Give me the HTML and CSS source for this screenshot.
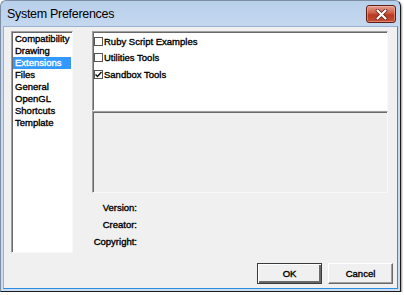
FILE: index.html
```html
<!DOCTYPE html>
<html lang="en">
<head>
    <meta charset="UTF-8">
    <title>System Preferences</title>
    <link rel="stylesheet" href="styles.css">
</head>
<body>
    <div class="window">
        <div class="titlebar">
            <span class="title">System Preferences</span>
            <button class="close" aria-label="Close">
                <svg width="13" height="11" viewBox="0 0 13 11">
                    <path d="M2.5 1.5 L10.5 9.5 M10.5 1.5 L2.5 9.5" stroke="#5a1a10" stroke-width="3.6" stroke-linecap="round"/>
                    <path d="M2.5 1.5 L10.5 9.5 M10.5 1.5 L2.5 9.5" stroke="#fff" stroke-width="2.2" stroke-linecap="round"/>
                </svg>
            </button>
        </div>

        <div class="client">
            <div class="main">
                <ul class="cats sunken">
                    <li>Compatibility</li>
                    <li>Drawing</li>
                    <li class="selected">Extensions</li>
                    <li>Files</li>
                    <li>General</li>
                    <li>OpenGL</li>
                    <li>Shortcuts</li>
                    <li>Template</li>
                </ul>

                <div class="details">
                    <ul class="extensions sunken">
                        <li><span class="check"></span>Ruby Script Examples</li>
                        <li><span class="check"></span>Utilities Tools</li>
                        <li><span class="check checked">
                            <svg width="7" height="7" viewBox="0 0 7 7"><path d="M0.5 3.5 L2.5 5.5 L6.5 1" fill="none" stroke="#111" stroke-width="1.5"/></svg>
                        </span>Sandbox Tools</li>
                    </ul>
                    <div class="description sunken"></div>
                    <div class="info">
                        <div class="label">Version:</div>
                        <div class="label">Creator:</div>
                        <div class="label">Copyright:</div>
                    </div>
                </div>
            </div>

            <div class="buttons">
                <button class="btn default">OK</button>
                <button class="btn">Cancel</button>
            </div>
        </div>
    </div>
</body>
</html>
```

FILE: styles.css
```css
body {
    margin: 0;
    background-color: #fff;
    font-family: "Liberation Sans", Arial, sans-serif;
}
.window {
    width: 401px;
    height: 292px;
    box-sizing: border-box;
    display: flex;
    flex-direction: column;
    padding: 0 2px 2px 2px;
    border: 1px solid #7d8ea4;
    border-right-color: #1b1b1b;
    border-bottom-color: #1b1b1b;
    border-radius: 6px 6px 0 0;
    background: linear-gradient(#b9d0eb, #c6d9ef 30px, #cadcf1);
    box-shadow: 1px 1px 2px rgba(0, 0, 0, 0.4);
}
.titlebar {
    height: 25px;
    display: flex;
    align-items: center;
    justify-content: space-between;
    padding: 0 2px 0 4px;
}
.title {
    font-size: 12.5px;
    letter-spacing: -0.3px;
    color: #000;
    margin-top: 1px;
}
.close {
    width: 30px;
    height: 18px;
    margin-top: 1px;
    padding: 0;
    display: flex;
    align-items: center;
    justify-content: center;
    border: 1px solid #5e1f14;
    border-radius: 3px;
    background: linear-gradient(#e3a090, #cf5a42 45%, #b83a22 55%, #c44e34);
    box-shadow: inset 0 0 0 1px rgba(255, 200, 190, 0.45);
}
.client {
    flex: 1;
    display: flex;
    flex-direction: column;
    padding: 4px 4px 4px 7px;
    background-color: #f0f0f0;
    border: 1px solid #98b1cf;
    border-right-color: #2a8fe0;
    border-bottom-color: #2a8fe0;
    font-size: 9.5px;
    color: #000;
    -webkit-text-stroke: 0.35px #000;
}
.main {
    display: flex;
    gap: 19px;
    height: 222px;
}
.sunken {
    box-sizing: border-box;
    border-style: solid;
    border-width: 1px;
    border-color: #a0a0a0 #f8f8f8 #f8f8f8 #a0a0a0;
    box-shadow: inset 1px 1px 0 #696969;
}
ul {
    list-style: none;
    margin: 0;
    padding: 0;
}
.cats {
    width: 62px;
    height: 222px;
    background-color: #fff;
    padding: 1px 1px 0 1px;
}
.cats li {
    height: 12px;
    line-height: 12px;
    padding-left: 2px;
    white-space: nowrap;
}
.cats li.selected {
    background-color: #3399ff;
    color: #fff;
    -webkit-text-stroke: 0.35px #fff;
}
.details {
    width: 296px;
    display: flex;
    flex-direction: column;
}
.extensions {
    height: 80px;
    background-color: #fff;
    padding: 1px 0 0 1px;
}
.extensions li {
    height: 16.5px;
    display: flex;
    align-items: center;
}
.check {
    width: 9px;
    height: 9px;
    box-sizing: border-box;
    margin-right: 1px;
    border: 1px solid #555;
    background-color: #fff;
    display: flex;
    align-items: center;
    justify-content: center;
}
.description {
    height: 82px;
    background-color: #efefef;
}
.info {
    margin-top: 6px;
}
.label {
    width: 45px;
    line-height: 17px;
    text-align: right;
}
.buttons {
    margin-top: 10px;
    display: flex;
    justify-content: flex-end;
    gap: 6px;
}
.btn {
    width: 65px;
    height: 21px;
    padding: 0;
    font-family: "Liberation Sans", Arial, sans-serif;
    font-size: 9.5px;
    color: #000;
    -webkit-text-stroke: 0.35px #000;
    background-color: #f0f0f0;
    border-style: solid;
    border-width: 1px;
    border-color: #fff #696969 #696969 #fff;
    box-shadow: inset -1px -1px 0 #a0a0a0;
}
.btn.default {
    border-color: #3a3a3a;
    box-shadow: inset 1px 1px 0 #fff, inset -2px -2px 0 #696969;
}
```
